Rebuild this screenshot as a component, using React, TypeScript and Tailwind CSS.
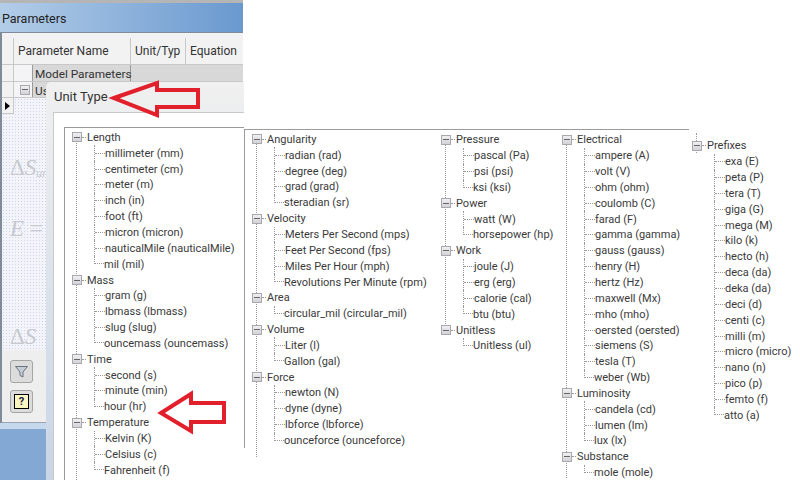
const font = "font-['Roboto','Liberation_Sans',sans-serif]";

type Group = { name: string; items: string[] };

const col1: Group[] = [
  { name: "Length", items: ["millimeter (mm)", "centimeter (cm)", "meter (m)", "inch (in)", "foot (ft)", "micron (micron)", "nauticalMile (nauticalMile)", "mil (mil)"] },
  { name: "Mass", items: ["gram (g)", "lbmass (lbmass)", "slug (slug)", "ouncemass (ouncemass)"] },
  { name: "Time", items: ["second (s)", "minute (min)", "hour (hr)"] },
  { name: "Temperature", items: ["Kelvin (K)", "Celsius (c)", "Fahrenheit (f)"] },
];
const col2: Group[] = [
  { name: "Angularity", items: ["radian (rad)", "degree (deg)", "grad (grad)", "steradian (sr)"] },
  { name: "Velocity", items: ["Meters Per Second (mps)", "Feet Per Second (fps)", "Miles Per Hour (mph)", "Revolutions Per Minute (rpm)"] },
  { name: "Area", items: ["circular_mil (circular_mil)"] },
  { name: "Volume", items: ["Liter (l)", "Gallon (gal)"] },
  { name: "Force", items: ["newton (N)", "dyne (dyne)", "lbforce (lbforce)", "ounceforce (ounceforce)"] },
];
const col3: Group[] = [
  { name: "Pressure", items: ["pascal (Pa)", "psi (psi)", "ksi (ksi)"] },
  { name: "Power", items: ["watt (W)", "horsepower (hp)"] },
  { name: "Work", items: ["joule (J)", "erg (erg)", "calorie (cal)", "btu (btu)"] },
  { name: "Unitless", items: ["Unitless (ul)"] },
];
const col4: Group[] = [
  { name: "Electrical", items: ["ampere (A)", "volt (V)", "ohm (ohm)", "coulomb (C)", "farad (F)", "gamma (gamma)", "gauss (gauss)", "henry (H)", "hertz (Hz)", "maxwell (Mx)", "mho (mho)", "oersted (oersted)", "siemens (S)", "tesla (T)", "weber (Wb)"] },
  { name: "Luminosity", items: ["candela (cd)", "lumen (lm)", "lux (lx)"] },
  { name: "Substance", items: ["mole (mole)"] },
];
const col5: Group[] = [
  { name: "Prefixes", items: ["exa (E)", "peta (P)", "tera (T)", "giga (G)", "mega (M)", "kilo (k)", "hecto (h)", "deca (da)", "deka (da)", "deci (d)", "centi (c)", "milli (m)", "micro (micro)", "nano (n)", "pico (p)", "femto (f)", "atto (a)"] },
];

function Minus() {
  return (
    <span className="relative flex h-[10px] w-[10px] shrink-0 items-center justify-center border border-[#a9a9ad] bg-gradient-to-b from-[#f0f0f2] to-[#d2d2d8]">
      <span className="h-px w-[6px] bg-[#666]" />
    </span>
  );
}

function Tree({ groups, line }: { groups: Group[]; line: string }) {
  return (
    <div className={`${font} relative text-[11px] text-[#3a3a3a]`}>
      <span className={`absolute left-[4px] w-0 border-l border-dotted border-[#9a9a9a] ${line}`} />
      {groups.map((g) => (
        <div key={g.name}>
          <div className="flex h-[15.85px] items-center">
            <Minus />
            <span className="h-0 w-[4px] border-t border-dotted border-[#9a9a9a]" />
            <span className="pl-px leading-none">{g.name}</span>
          </div>
          <div className="ml-[22px]">
            {g.items.map((it, i) => (
              <div key={it} className="flex h-[15.85px] items-center">
                {i === g.items.length - 1 ? (
                  <span className="h-[8px] w-[10px] self-start border-b border-l border-dotted border-[#9a9a9a]" />
                ) : (
                  <>
                    <span className="h-full w-0 border-l border-dotted border-[#9a9a9a]" />
                    <span className="h-0 w-[10px] border-t border-dotted border-[#9a9a9a]" />
                  </>
                )}
                <span className="whitespace-nowrap leading-none">{it}</span>
              </div>
            ))}
          </div>
        </div>
      ))}
    </div>
  );
}

export default function App() {
  return (
    <div className="relative h-[492px] w-[800px] overflow-hidden bg-white">
      {/* Parameters window */}
      <div className={`${font} absolute left-0 top-0 flex h-[480px] w-[243px] flex-col bg-[#84a8d4]`}>
        <div className="h-[3px] bg-[#b5b5b5]" />
        <div className="flex h-[29px] items-center bg-gradient-to-r from-[#b3cde8] to-[#6a99cf] pl-[2px] pt-[3px] text-[12.5px] text-[#222]">
          Parameters
        </div>
        <div className="flex h-[391px] flex-col border-l-2 border-t border-[#7f8b99] bg-[#eeeeee]">
          <div className="flex h-[32px] border-b border-[#c8c8c8] bg-[#f2f2f2] pt-[5px] text-[12px] text-[#333]">
            <div className="w-[12px] border-r border-[#c8c8c8]" />
            <div className="flex w-[117px] items-center border-r border-[#c8c8c8] pl-[4px]">Parameter Name</div>
            <div className="flex w-[55px] items-center overflow-hidden whitespace-nowrap border-r border-[#c8c8c8] pl-[4px]">Unit/Typ</div>
            <div className="flex items-center pl-[4px]">Equation</div>
          </div>
          <div className="flex h-[17px] border-b border-[#c8c8c8] bg-[#d8d8d8] text-[11.8px] text-[#333]">
            <div className="w-[12px] border-r border-[#c8c8c8] bg-[#f2f2f2]" />
            <div className="w-[18px] bg-[#f4f4f6]" />
            <div className="w-[99px] whitespace-nowrap border-l border-r border-[#9a9a9a] pl-[2px] leading-[19px]">Model Parameters</div>
          </div>
          <div className="flex h-[16px] border-b border-[#c8c8c8] bg-[#d8d8d8] text-[11.8px] text-[#333]">
            <div className="w-[12px] border-r border-[#c8c8c8] bg-[#f2f2f2]" />
            <div className="flex w-[18px] items-center bg-[#f4f4f6] pl-[6px]"><Minus /></div>
            <div className="w-[99px] border-l border-r border-[#9a9a9a] pl-[2px] leading-[18px]">Us</div>
          </div>
          <div className="relative flex h-[252px] flex-col overflow-hidden bg-[#f3f4fa] bg-[radial-gradient(#cfd4ea_0.6px,transparent_0.7px)] bg-[size:3px_3px] pl-[8px] font-['Liberation_Serif',serif] text-[#c6c9ce]">
            <div className="absolute left-0 top-0 flex h-[16px] w-[12px] items-center justify-center border-b border-r border-[#c8c8c8] bg-[#f2f2f2]">
              <span className="h-0 w-0 border-y-[4px] border-l-[5px] border-y-transparent border-l-black" />
            </div>
            <div className="mt-[56px] flex h-[30px] items-end text-[23px] italic leading-none">
              <span className="not-italic">Δ</span>S<span className="text-[12px]">unit</span>
            </div>
            <div className="mt-[38px] h-[30px] text-[23px] italic leading-none">
              E <span className="not-italic">=</span>
            </div>
            <div className="mt-[83px] h-[30px] text-[23px] italic leading-none">
              <span className="not-italic">Δ</span>S
            </div>
          </div>
          <div className="flex flex-1 flex-col gap-[7px] border-b border-[#9aa5b2] pl-[8px] pt-[10px]">
            <div className="flex h-[23px] w-[23px] items-center justify-center rounded-[3px] border border-[#a5a5a5] bg-[#dcdcdc]">
              <svg width="15" height="15" viewBox="0 0 15 15" fill="#c5ccd6" stroke="#6c7480"><path d="M1.5 2.5 H13.5 L9 8 V13 L6 11.5 V8 Z" /></svg>
            </div>
            <div className="flex h-[23px] w-[23px] items-center justify-center rounded-[3px] border border-[#a5a5a5] bg-[#dcdcdc]">
              <span className="h-[15px] w-[15px] border border-black bg-[#fbf7c0] text-center text-[11px] font-bold leading-[13px] text-[#1a1a50]">?</span>
            </div>
          </div>
        </div>
        <div className="h-[6px] bg-[#c5d8ec]" />
      </div>

      {/* Unit Type dialog */}
      <div className={`${font} absolute left-[46px] top-[82px] flex h-[398px] w-[198px] flex-col overflow-hidden rounded-tl-[5px] bg-gradient-to-b from-[#f0f0f0] to-[#c9d5e5] pl-[7px]`}>
        <div className="flex h-[30px] items-center pl-px text-[13px] text-[#333]">Unit Type</div>
        <div className="flex-1 border-l border-t border-[#c9c9c9] bg-white pl-[10px] pt-[14px]">
          <div className="h-full border-l border-t border-[#9b9b9b] pl-[7px] pt-[1.5px]">
            <Tree groups={col1} line="top-[4px] -bottom-[8px]" />
          </div>
        </div>
      </div>

      {/* Pasted tree columns */}
      <div className="absolute left-[244px] top-[129px] flex h-[319px] w-[445px] border-l border-t border-[#9b9b9b] bg-white">
        <div className="h-full w-[196px] pl-[7px] pt-[1.5px]">
          <Tree groups={col2} line="top-[4px] -bottom-[9px]" />
        </div>
        <div className="w-[122px] pt-[2px]">
          <Tree groups={col3} line="top-[4px] bottom-[24px]" />
        </div>
      </div>
      <div className="absolute left-[562px] top-[132px]">
        <Tree groups={col4} line="top-[4px] bottom-[3px]" />
      </div>
      <div className="absolute left-[692px] top-[138px]">
        <Tree groups={col5} line="-top-[5px] bottom-[270px]" />
      </div>

      {/* Red callout arrows */}
      <svg className="absolute left-[108px] top-[78px]" width="96" height="44" viewBox="0 0 96 44" fill="none" stroke="#e2202c" strokeWidth="4">
        <path d="M6 20 L49 5 L49 12 L90 12 L90 29 L49 29 L49 37 Z" />
      </svg>
      <svg className="absolute left-[154px] top-[388px]" width="76" height="50" viewBox="0 0 76 50" fill="none" stroke="#e2202c" strokeWidth="4">
        <path d="M7 25 L37 6 L37 15 L70 15 L70 34 L37 34 L37 43 Z" />
      </svg>
    </div>
  );
}
